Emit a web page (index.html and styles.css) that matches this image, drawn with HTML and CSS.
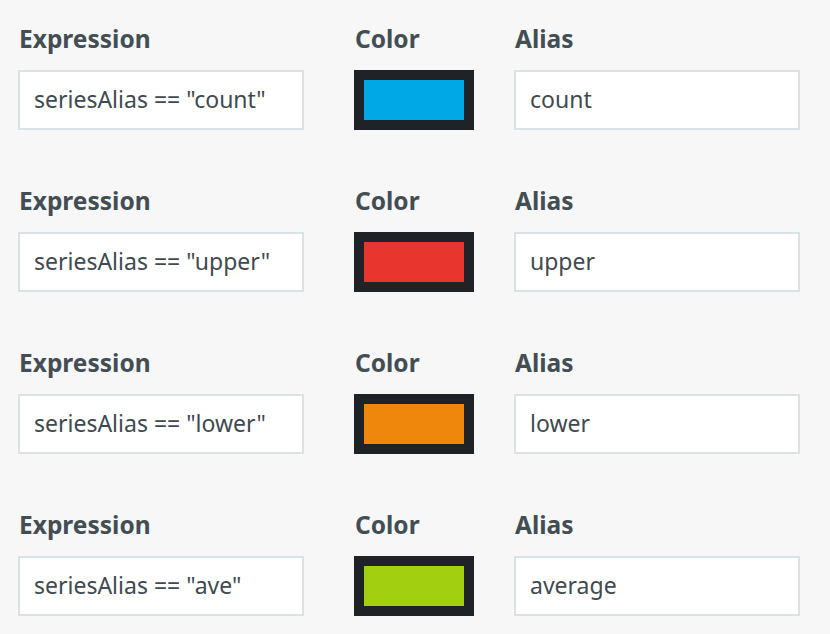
FILE: index.html
```html
<!DOCTYPE html>
<html>
<head>
<meta charset="utf-8">
<link rel="stylesheet" href="styles.css">
</head>
<body>
<div class="list">
  <div class="row">
    <div class="field expr"><div class="label">Expression</div><div class="input">seriesAlias == "count"</div></div>
    <div class="field color"><div class="label">Color</div><div class="swatch"><div class="fill blue"></div></div></div>
    <div class="field alias"><div class="label">Alias</div><div class="input">count</div></div>
  </div>
  <div class="row">
    <div class="field expr"><div class="label">Expression</div><div class="input">seriesAlias == "upper"</div></div>
    <div class="field color"><div class="label">Color</div><div class="swatch"><div class="fill red"></div></div></div>
    <div class="field alias"><div class="label">Alias</div><div class="input">upper</div></div>
  </div>
  <div class="row">
    <div class="field expr"><div class="label">Expression</div><div class="input">seriesAlias == "lower"</div></div>
    <div class="field color"><div class="label">Color</div><div class="swatch"><div class="fill orange"></div></div></div>
    <div class="field alias"><div class="label">Alias</div><div class="input">lower</div></div>
  </div>
  <div class="row">
    <div class="field expr"><div class="label">Expression</div><div class="input">seriesAlias == "ave"</div></div>
    <div class="field color"><div class="label">Color</div><div class="swatch"><div class="fill green"></div></div></div>
    <div class="field alias"><div class="label">Alias</div><div class="input">average</div></div>
  </div>
</div>
</body>
</html>
```
FILE: styles.css
```css
html, body {
  margin: 0;
  padding: 0;
  background: #f7f7f7;
  font-family: "Noto Sans", "Open Sans", sans-serif;
  color: #434e54;
}
.list {
  display: flex;
  flex-direction: column;
  gap: 55px;
  padding: 23px 0 0 18px;
}
.row {
  display: flex;
}
.expr { width: 286px; }
.color { width: 120px; margin-left: 50px; }
.alias { width: 286px; margin-left: 40px; }
.label {
  font-size: 24.5px;
  font-weight: 700;
  line-height: 32px;
  margin-bottom: 15px;
  padding-left: 1px;
}
.input {
  box-sizing: border-box;
  height: 60px;
  background: #fff;
  border: 2px solid #dbe2e5;
  padding: 0 14px;
  font-size: 23px;
  line-height: 55px;
  white-space: nowrap;
  color: #3f4a50;
}
.swatch {
  box-sizing: border-box;
  width: 120px;
  height: 60px;
  background: #1f2327;
  padding: 10px;
}
.fill { width: 100%; height: 100%; }
.blue { background: #00a9e5; }
.red { background: #e8352d; }
.orange { background: #ee870b; }
.green { background: #a2cf10; }
```
